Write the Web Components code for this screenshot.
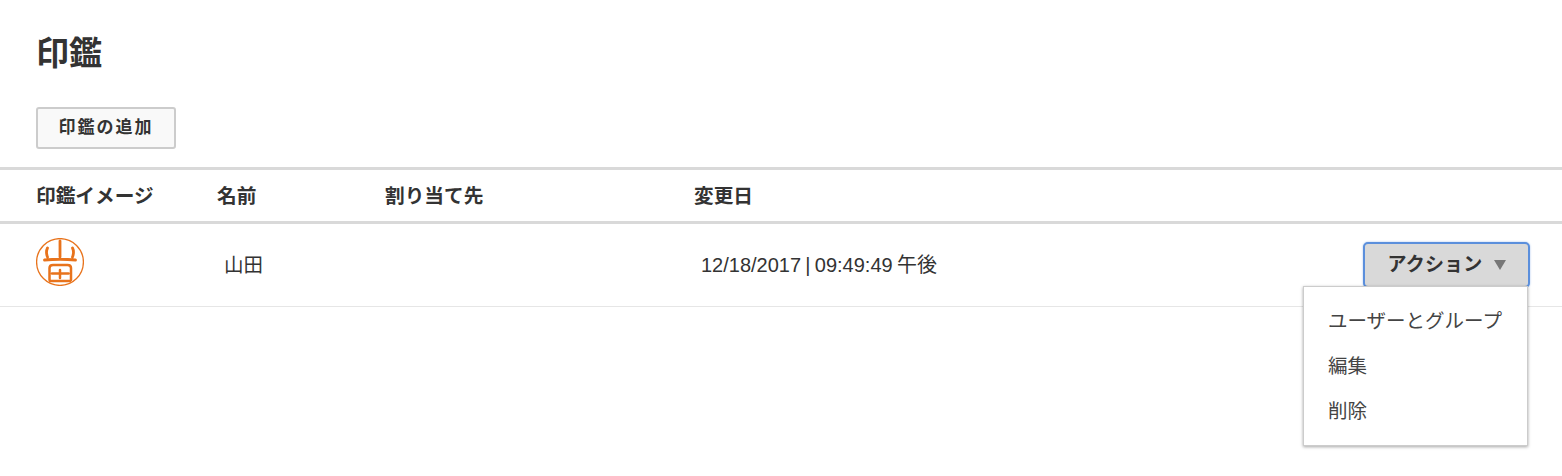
<!doctype html>
<html lang="ja">
<head>
<meta charset="utf-8">
<title>印鑑</title>
<style>
    body {
        margin: 0;
        min-height: 100vh;
        background: #fff;
        color: #333;
        font-family: "Liberation Sans", "Noto Sans CJK JP", sans-serif;
    }
</style>
</head>
<body>
<stamp-page>
    <span slot="title">印鑑</span>
    <stamp-button slot="toolbar">印鑑の追加</stamp-button>
    <stamp-table>
        <stamp-row header>
            <span>印鑑イメージ</span>
            <span>名前</span>
            <span>割り当て先</span>
            <span>変更日</span>
        </stamp-row>
        <stamp-row>
            <stamp-seal></stamp-seal>
            <span>山田</span>
            <span></span>
            <span class="date">12/18/2017 | 09:49:49 午後</span>
            <action-menu label="アクション">
                <span>ユーザーとグループ</span>
                <span>編集</span>
                <span>削除</span>
            </action-menu>
        </stamp-row>
    </stamp-table>
</stamp-page>

<script>
class StampPage extends HTMLElement {
    constructor() {
        super()
        this.attachShadow({ mode: "open" })
        this.shadowRoot.innerHTML = /*html*/ `
            <style>
                :host {
                    display: block;
                }

                h1 {
                    margin: 0;
                    padding: 34px 0 0 36px;
                    font-size: 33px;
                    line-height: 40px;
                    font-weight: 700;
                }

                #toolbar {
                    padding: 33px 0 18px 36px;
                    display: flex;
                }
            </style>
            <h1><slot name="title"></slot></h1>
            <div id="toolbar"><slot name="toolbar"></slot></div>
            <slot></slot>
        `
    }
}

class StampButton extends HTMLElement {
    constructor() {
        super()
        this.attachShadow({ mode: "open" })
        this.shadowRoot.innerHTML = /*html*/ `
            <style>
                :host {
                    display: inline-block;
                }

                button {
                    all: unset;
                    box-sizing: border-box;
                    display: block;
                    width: 140px;
                    height: 42px;
                    border: 2px solid #ccc;
                    border-radius: 3px;
                    background: #f9f9f9;
                    color: #333;
                    font: 700 17px/38px "Liberation Sans", "Noto Sans CJK JP", sans-serif;
                    letter-spacing: 2px;
                    text-align: center;
                }
            </style>
            <button><slot></slot></button>
        `
    }
}

class StampTable extends HTMLElement {
    constructor() {
        super()
        this.attachShadow({ mode: "open" })
        this.shadowRoot.innerHTML = /*html*/ `
            <style>
                :host {
                    display: block;
                    border-top: 3px solid #d9d9d9;
                }
            </style>
            <slot></slot>
        `
    }
}

class StampRow extends HTMLElement {
    constructor() {
        super()
        this.attachShadow({ mode: "open" })
        this.shadowRoot.innerHTML = /*html*/ `
            <style>
                :host {
                    display: grid;
                    grid-template-columns: 180px 169px 308px 1fr auto;
                    align-items: center;
                    box-sizing: border-box;
                    height: 83px;
                    padding: 0 32px 0 36px;
                    border-bottom: 1px solid #e6e6e6;
                    font-size: 19.5px;
                    line-height: 26px;
                }

                :host([header]) {
                    grid-template-columns: 181px 168px 309px 1fr;
                    height: 54px;
                    border-bottom: 3px solid #d9d9d9;
                    font-size: 19.7px;
                    font-weight: 700;
                }

                :host(:not([header])) ::slotted(span) {
                    padding-left: 8px;
                }

                ::slotted(.date) {
                    font-size: 20px;
                    word-spacing: -1.3px;
                }

                ::slotted(stamp-seal) {
                    align-self: start;
                    margin-top: 14px;
                }
            </style>
            <slot></slot>
        `
    }
}

class StampSeal extends HTMLElement {
    constructor() {
        super()
        this.attachShadow({ mode: "open" })
        this.shadowRoot.innerHTML = /*html*/ `
            <style>
                :host {
                    display: block;
                    width: 48px;
                    height: 48px;
                }

                svg {
                    display: block;
                    fill: none;
                    stroke: #e8731c;
                    stroke-linecap: round;
                }
            </style>
            <svg width="48" height="48" viewBox="0 0 48 48">
                <circle cx="24" cy="24" r="23.4" stroke-width="1.3"/>
                <path stroke-width="2.8" d="M24 3V19M11.5 10Q9.5 14 11.5 19M36.5 10Q38.5 14 36.5 19M8.5 22Q24 20.5 39.5 22"/>
                <path stroke-width="2.5" d="M13.5 42V30Q13.5 27 17 27H31.5Q35 27 35 30V42M24 32V40M16 35.5H32.5M14 43H34"/>
            </svg>
        `
    }
}

class ActionMenu extends HTMLElement {
    constructor() {
        super()
        this.attachShadow({ mode: "open" })
        this.shadowRoot.innerHTML = /*html*/ `
            <style>
                :host {
                    display: block;
                    position: relative;
                }

                button {
                    all: unset;
                    box-sizing: border-box;
                    display: flex;
                    align-items: center;
                    justify-content: center;
                    gap: 11px;
                    width: 167px;
                    height: 46px;
                    border: 2px solid #5b8fdc;
                    border-radius: 5px;
                    background: #d9d9d9;
                    box-shadow: 0 0 2px rgba(91, 143, 220, .6);
                    font-weight: 700;
                    font-size: 19px;
                    letter-spacing: .2px;
                    color: #333;
                }

                #caret {
                    width: 0;
                    height: 0;
                    border: 6.5px solid transparent;
                    border-top: 10px solid #777;
                    border-bottom: 0;
                }

                #menu {
                    position: absolute;
                    top: 44px;
                    right: 2px;
                    box-sizing: border-box;
                    width: 225px;
                    height: 160px;
                    padding: 12px 24px;
                    display: flex;
                    flex-direction: column;
                    background: #fff;
                    border: 1px solid #ccc;
                    box-shadow: 0 1px 3px rgba(0, 0, 0, .35);
                }

                ::slotted(span) {
                    display: block;
                    height: 45px;
                    line-height: 45px;
                    white-space: nowrap;
                    color: #444;
                    font-weight: 400;
                }
            </style>
            <button><span>${this.getAttribute("label")}</span><span id="caret"></span></button>
            <div id="menu"><slot></slot></div>
        `
    }
}

customElements.define("stamp-page", StampPage)
customElements.define("stamp-button", StampButton)
customElements.define("stamp-table", StampTable)
customElements.define("stamp-row", StampRow)
customElements.define("stamp-seal", StampSeal)
customElements.define("action-menu", ActionMenu)
</script>
</body>
</html>
